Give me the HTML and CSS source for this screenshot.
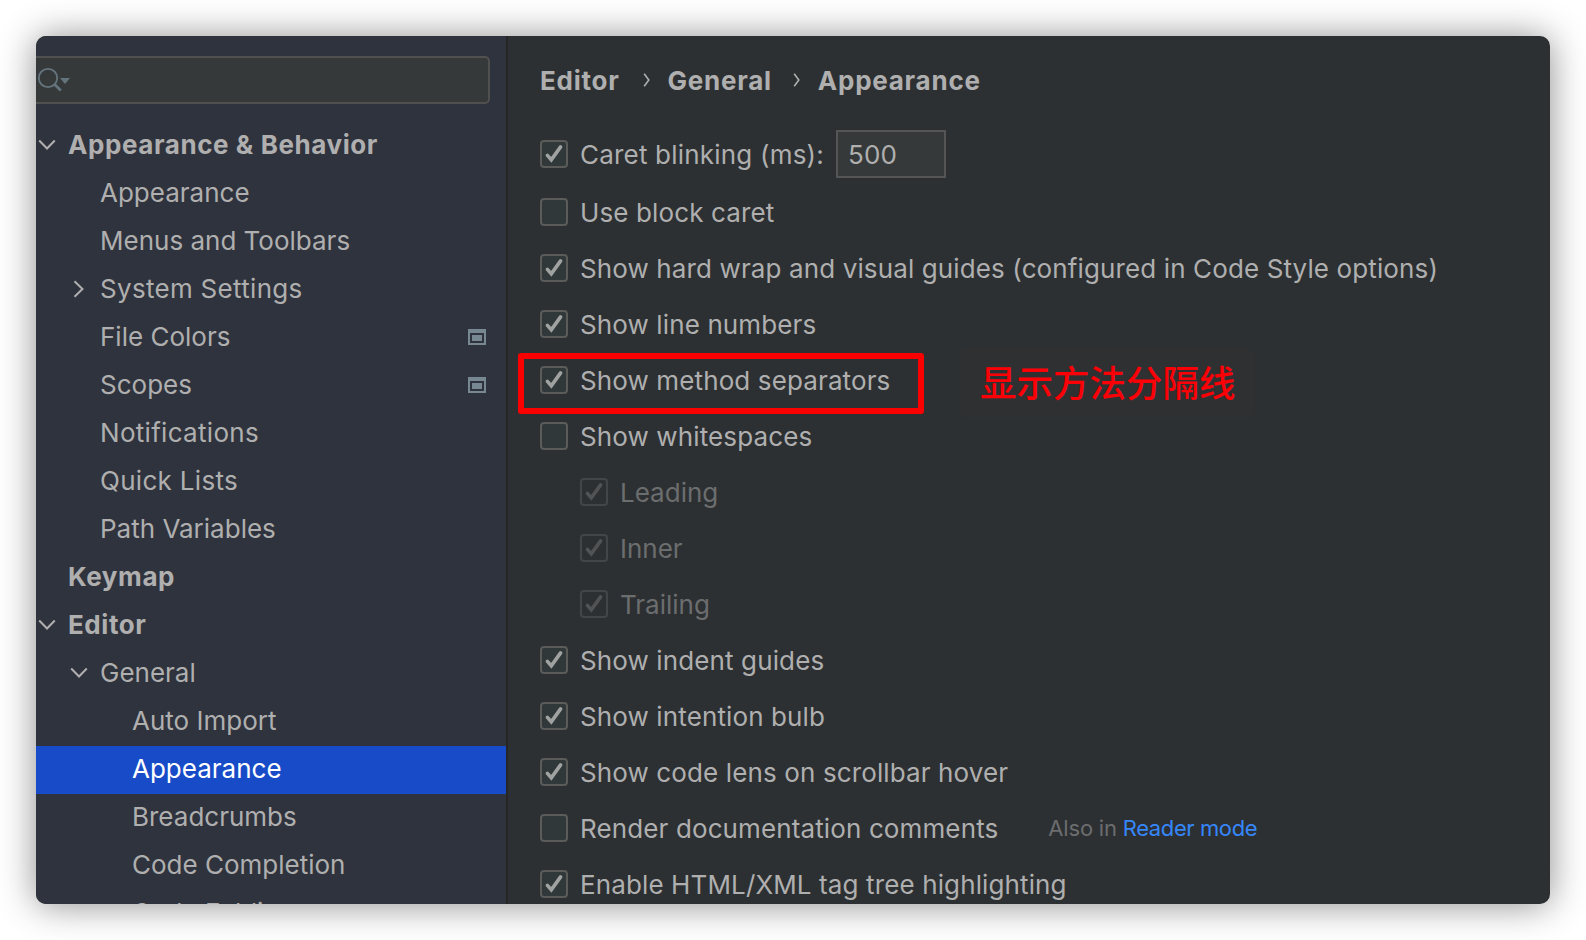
FILE: index.html
```html
<!DOCTYPE html>
<html lang="en">
<head>
<meta charset="utf-8">
<title>Settings</title>
<link rel="stylesheet" href="styles.css">
</head>
<body>
<svg class="defs" aria-hidden="true">
  <symbol id="down" viewBox="0 0 18 12"><path d="M1.2 1.5 9 9.5 16.8 1.5"/></symbol>
  <symbol id="right" viewBox="0 0 12 18"><path d="M1.5 1.2 9.5 9 1.5 16.8"/></symbol>
  <symbol id="tick" viewBox="0 0 28 28"><path d="M7.4 15.4 11.3 19.8 20.6 6.9"/></symbol>
  <symbol id="crumb" viewBox="0 0 8 14"><path d="M1.2.8 5.8 7 1.2 13.2"/></symbol>
  <symbol id="project" viewBox="0 0 18 16"><path fill-rule="evenodd" d="M0 0H18V16H0ZM2 4V14H16V4ZM4 6H14V12H4Z"/></symbol>
</svg>
<div class="window">
  <aside class="sidebar">
    <div class="search">
      <svg class="search-icon" viewBox="0 0 34 26"><circle cx="12" cy="12" r="9.2"/><path class="handle" d="M18.4 18.3 24.8 24.4"/><path class="caret" d="M24 12H34L29 18Z"/></svg>
    </div>
    <ul class="tree">
      <li class="node top"><svg class="arrow-down"><use href="#down"/></svg><span>Appearance &amp; Behavior</span></li>
      <li class="node sub"><span>Appearance</span></li>
      <li class="node sub"><span>Menus and Toolbars</span></li>
      <li class="node sub loose"><svg class="arrow-right"><use href="#right"/></svg><span>System Settings</span></li>
      <li class="node sub"><span>File Colors</span><svg class="project"><use href="#project"/></svg></li>
      <li class="node sub"><span>Scopes</span><svg class="project"><use href="#project"/></svg></li>
      <li class="node sub loose"><span>Notifications</span></li>
      <li class="node sub loose"><span>Quick Lists</span></li>
      <li class="node sub"><span>Path Variables</span></li>
      <li class="node top"><span>Keymap</span></li>
      <li class="node top"><svg class="arrow-down"><use href="#down"/></svg><span>Editor</span></li>
      <li class="node sub"><svg class="arrow-down"><use href="#down"/></svg><span>General</span></li>
      <li class="node leaf"><span>Auto Import</span></li>
      <li class="node leaf selected"><span>Appearance</span></li>
      <li class="node leaf"><span>Breadcrumbs</span></li>
      <li class="node leaf"><span>Code Completion</span></li>
      <li class="node leaf"><span>Code Folding</span></li>
    </ul>
  </aside>
  <main class="content">
    <nav class="crumbs"><span>Editor</span><svg><use href="#crumb"/></svg><span>General</span><svg><use href="#crumb"/></svg><span>Appearance</span></nav>
    <div class="option first"><i class="box"><svg><use href="#tick"/></svg></i><span>Caret blinking (ms):</span><div class="field">500</div></div>
    <div class="option"><i class="box"></i><span>Use block caret</span></div>
    <div class="option"><i class="box"><svg><use href="#tick"/></svg></i><span>Show hard wrap and visual guides (configured in Code Style options)</span></div>
    <div class="option"><i class="box"><svg><use href="#tick"/></svg></i><span>Show line numbers</span></div>
    <div class="option"><i class="box"><svg><use href="#tick"/></svg></i><span>Show method separators</span><div class="frame"></div><div class="note" lang="zh">显示方法分隔线</div></div>
    <div class="option"><i class="box"></i><span>Show whitespaces</span></div>
    <div class="option off"><i class="box"><svg><use href="#tick"/></svg></i><span>Leading</span></div>
    <div class="option off"><i class="box"><svg><use href="#tick"/></svg></i><span>Inner</span></div>
    <div class="option off"><i class="box"><svg><use href="#tick"/></svg></i><span>Trailing</span></div>
    <div class="option"><i class="box"><svg><use href="#tick"/></svg></i><span>Show indent guides</span></div>
    <div class="option"><i class="box"><svg><use href="#tick"/></svg></i><span>Show intention bulb</span></div>
    <div class="option"><i class="box"><svg><use href="#tick"/></svg></i><span>Show code lens on scrollbar hover</span></div>
    <div class="option"><i class="box"></i><span>Render documentation comments</span><div class="hint">Also in <a>Reader mode</a></div></div>
    <div class="option"><i class="box"><svg><use href="#tick"/></svg></i><span>Enable HTML/XML tag tree highlighting</span></div>
  </main>
</div>
</body>
</html>
```
FILE: styles.css
```css
* { box-sizing: border-box; }
body {
  margin: 0;
  height: 940px;
  padding: 36px;
  overflow: hidden;
  background: #fff;
  font: 26px/48px Inter, "Noto Sans CJK SC", sans-serif;
  color: #afafaf;
  white-space: nowrap;
}
svg { display: block; flex: none; fill: none; }
.defs { position: absolute; width: 0; height: 0; }
.window {
  display: flex;
  width: 1514px;
  height: 868px;
  overflow: hidden;
  border-radius: 10px;
  background: #2d3032;
  box-shadow: 0 1px 36px rgba(0, 0, 0, .45);
}

/* Sidebar */
.sidebar {
  flex: none;
  width: 472px;
  height: 868px;
  padding-top: 20px;
  border-right: 2px solid #262626;
  background: #2f333d;
}
.search {
  width: 454px;
  height: 48px;
  padding: 8px 0 0 0;
  border: 2px solid #50504e;
  border-left: 0;
  border-radius: 0 5px 5px 0;
  background: #36393a;
}
.search-icon { width: 34px; height: 26px; stroke: #64747d; stroke-width: 1.8; }
.search-icon .handle { stroke-width: 2.8; }
.search-icon .caret { fill: #64747d; stroke: none; }
.tree { margin: 18px 0 0; padding: 0; list-style: none; }
.node {
  display: flex;
  align-items: center;
  height: 48px;
  padding: 0 20px 2px 0;
  line-height: 46px;
}
.top { padding-left: 32px; font-weight: 700; letter-spacing: .58px; }
.sub { padding-left: 64px; }
.leaf { padding-left: 96px; }
.loose { letter-spacing: .3px; }
.arrow-down, .arrow-right { stroke: #afafaf; stroke-width: 2; }
.arrow-down { width: 18px; height: 12px; margin: 0 12px 0 -30px; }
.arrow-right { width: 12px; height: 18px; margin: 0 15px 0 -27px; }
.project { width: 18px; height: 16px; margin: -1px 0 0 auto; fill: #778893; }
.selected { background: #184bc8; color: #fff; }

/* Settings page */
.content { flex: 1; padding: 20px 0 0 32px; }
.crumbs {
  display: flex;
  align-items: center;
  height: 48px;
  margin-bottom: 22px;
  font-weight: 700;
  letter-spacing: .75px;
}
.crumbs span { padding-top: 2px; }
.crumbs svg { width: 8px; height: 14px; margin: -1px 17px 0 23px; stroke: #afafaf; stroke-width: 1.6; }
.crumbs svg:nth-of-type(2) { margin-left: 21px; }
.option { position: relative; display: flex; align-items: center; height: 56px; letter-spacing: .12px; }
.first { margin-bottom: 2px; }
.option > span { margin-left: 12px; padding-top: 2px; }
.first > span { letter-spacing: .2px; }
.box {
  flex: none;
  width: 28px;
  height: 28px;
  border: 2px solid #5b5b59;
  border-radius: 4px;
  background: #303839;
}
.box svg { width: 28px; height: 28px; margin: -2px; stroke: #a0a2a1; stroke-width: 3.6; stroke-linecap: round; }
.field {
  width: 110px;
  height: 48px;
  margin-left: 12px;
  padding-left: 10px;
  border: 2px solid #555;
  background: #363939;
  line-height: 46px;
}
.off { padding-left: 40px; color: #6b6d6e; letter-spacing: 0; }
.off .box { border-color: #434546; background: #2d3032; }
.off .box svg { stroke: #505253; }
.frame {
  position: absolute;
  left: -22px;
  top: 1px;
  width: 406px;
  height: 61px;
  border: 6px solid #fb0000;
  border-radius: 3px;
}
.note {
  position: absolute;
  left: 420px;
  top: -4px;
  width: 294px;
  height: 70px;
  padding-left: 20px;
  border-radius: 6px;
  background: #2f3031;
  color: #fb0007;
  font-family: "Noto Sans CJK SC", sans-serif;
  font-size: 36.5px;
  font-weight: 500;
  letter-spacing: 0;
  line-height: 68px;
}
.hint { margin-left: 50px; color: #6b6d6e; font-size: 22px; letter-spacing: -.2px; }
.hint a { color: #3587fb; letter-spacing: -.4px; }
```
